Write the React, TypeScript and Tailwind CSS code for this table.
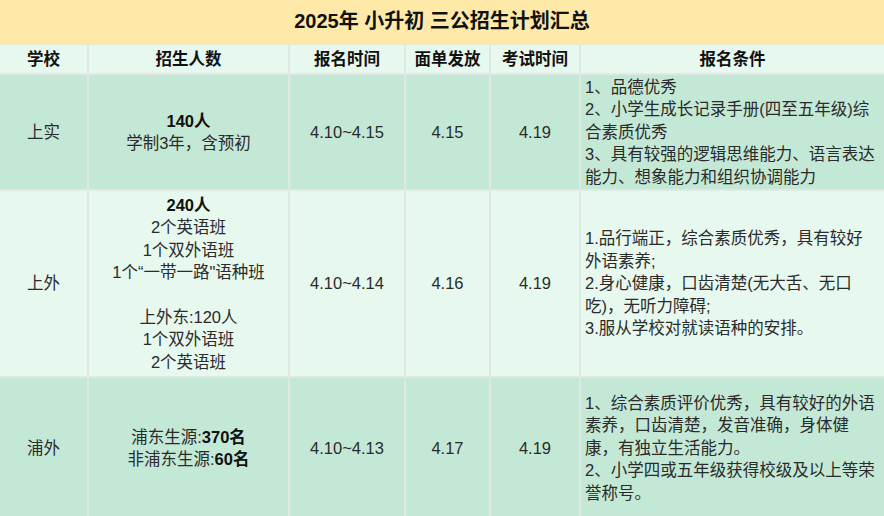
const rows = [
  {
    school: "上实",
    quota: [[{ t: "140人", b: true }], [{ t: "学制3年，含预初" }]],
    apply: "4.10~4.15",
    notice: "4.15",
    exam: "4.19",
    cond: [
      "1、品德优秀",
      "2、小学生成长记录手册(四至五年级)综",
      "合素质优秀",
      "3、具有较强的逻辑思维能力、语言表达",
      "能力、想象能力和组织协调能力",
    ],
    bg: "bg-[#c4e8d6]",
    h: "h-[116px]",
  },
  {
    school: "上外",
    quota: [
      [{ t: "240人", b: true }],
      [{ t: "2个英语班" }],
      [{ t: "1个双外语班" }],
      [{ t: "1个“一带一路\"语种班" }],
      [{ t: "\u00a0" }],
      [{ t: "上外东:120人" }],
      [{ t: "1个双外语班" }],
      [{ t: "2个英语班" }],
    ],
    apply: "4.10~4.14",
    notice: "4.16",
    exam: "4.19",
    cond: [
      "1.品行端正，综合素质优秀，具有较好",
      "外语素养;",
      "2.身心健康，口齿清楚(无大舌、无口",
      "吃)，无听力障碍;",
      "3.服从学校对就读语种的安排。",
    ],
    bg: "bg-[#e7f8ee]",
    h: "h-[187px]",
  },
  {
    school: "浦外",
    quota: [
      [{ t: "浦东生源:" }, { t: "370名", b: true }],
      [{ t: "非浦东生源:" }, { t: "60名", b: true }],
    ],
    apply: "4.10~4.13",
    notice: "4.17",
    exam: "4.19",
    cond: [
      "1、综合素质评价优秀，具有较好的外语",
      "素养，口齿清楚，发音准确，身体健",
      "康，有独立生活能力。",
      "2、小学四或五年级获得校级及以上等荣",
      "誉称号。",
    ],
    bg: "bg-[#c4e8d6]",
    h: "h-[142px]",
  },
];

const heads = ["学校", "招生人数", "报名时间", "面单发放", "考试时间", "报名条件"];

const cell = "border-2 border-[#dfe8e3] align-middle";

export default function App() {
  return (
    <div className="w-[884px] h-[516px] overflow-hidden bg-[#c4e8d6] font-['Liberation_Sans','Noto_Sans_CJK_SC',sans-serif] text-[16.5px] leading-[22.4px] text-[#2b2b2b]">
      <table className="w-[886px] -ml-[2px] table-fixed border-collapse">
        <colgroup>
          <col className="w-[89px]" />
          <col className="w-[201px]" />
          <col className="w-[116px]" />
          <col className="w-[85px]" />
          <col className="w-[90px]" />
          <col className="w-[305px]" />
        </colgroup>
        <thead>
          <tr className="h-[44px] bg-[#fee9a9]">
            <th colSpan={6} className="border-2 border-[#e9e6d2] border-t-0 text-[20px] font-bold text-[#111]">
              2025年 小升初 三公招生计划汇总
            </th>
          </tr>
          <tr className="h-[30px] bg-[#e7f8ee]">
            {heads.map((h) => (
              <th key={h} className={`${cell} font-bold text-[#111]`}>
                {h}
              </th>
            ))}
          </tr>
        </thead>
        <tbody>
          {rows.map((r) => (
            <tr key={r.school} className={`${r.h} ${r.bg}`}>
              <td className={`${cell} text-center`}>{r.school}</td>
              <td className={`${cell} text-center`}>
                {r.quota.map((line, i) => (
                  <div key={i} className="whitespace-nowrap">
                    {line.map((s, j) => (
                      <span key={j} className={s.b ? "font-bold text-[#111]" : ""}>
                        {s.t}
                      </span>
                    ))}
                  </div>
                ))}
              </td>
              <td className={`${cell} text-center`}>{r.apply}</td>
              <td className={`${cell} text-center`}>{r.notice}</td>
              <td className={`${cell} text-center`}>{r.exam}</td>
              <td className={`${cell} pl-[4px]`}>
                {r.cond.map((c, i) => (
                  <div key={i} className="whitespace-nowrap">
                    {c}
                  </div>
                ))}
              </td>
            </tr>
          ))}
        </tbody>
      </table>
    </div>
  );
}
